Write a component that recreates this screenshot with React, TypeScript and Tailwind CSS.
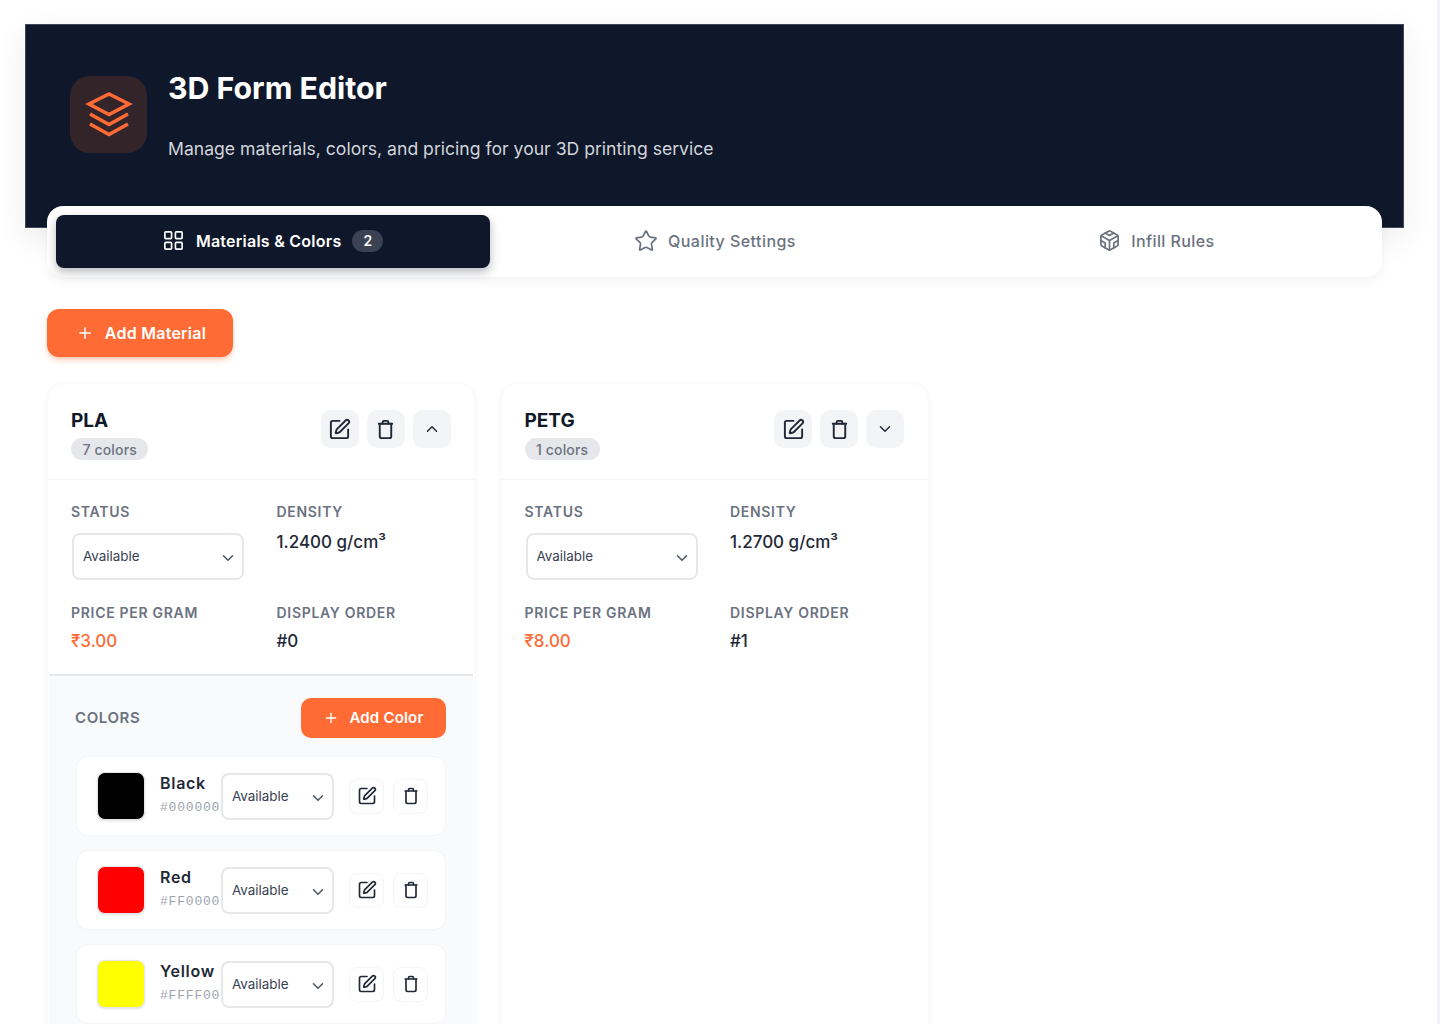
import React from 'react';
import { ChevronDown, ChevronUp, Codesandbox, LayoutGrid, Plus, SquarePen, Star } from 'lucide-react';

const TrashIcon = ({ className }: { className?: string }) => (
  <svg viewBox="0 0 24 24" fill="none" stroke="currentColor" strokeWidth="2" strokeLinecap="round" strokeLinejoin="round" className={className}>
    <path d="M5 6h14" />
    <path d="M6 6v13a2 2 0 0 0 2 2h8a2 2 0 0 0 2-2V6" />
    <path d="M9 6V4.5A1.5 1.5 0 0 1 10.5 3h3A1.5 1.5 0 0 1 15 4.5V6" />
  </svg>
);

const StackIcon = () => (
  <svg viewBox="0 0 48 48" fill="none" stroke="#ff6b35" strokeWidth="3.5" className="w-12 h-12">
    <path d="M24 3 L44 13 L24 23.5 L4 13 Z" />
    <path d="M5 23 L24 33.5 L43 23" />
    <path d="M5 33 L24 43.5 L43 33" />
  </svg>
);

const StatusSelect = ({ className }: { className: string }) => (
  <div className={`relative shrink-0 ${className}`}>
    <select className="w-full h-full appearance-none bg-white border-2 border-[#e5e7eb] rounded-lg pl-[9px] text-[13.4px] text-[#374151] outline-none">
      <option>Available</option>
      <option>Unavailable</option>
    </select>
    <ChevronDown className="absolute right-[7px] top-[16px] w-[18px] h-[18px] text-[#4b5563] pointer-events-none" />
  </div>
);

const Field = ({ label, children }: { label: string; children: React.ReactNode }) => (
  <div>
    <div className="text-[14px] leading-[20px] font-semibold uppercase tracking-[0.7px] text-[#6b7280]">{label}</div>
    {children}
  </div>
);

const colors = [
  { name: 'Black', hex: '#000000' },
  { name: 'Red', hex: '#FF0000' },
  { name: 'Yellow', hex: '#FFFF00' },
];

const ColorRow = ({ name, hex }: { name: string; hex: string }) => (
  <div className="flex items-center h-[80px] bg-white border border-[#f3f4f6] rounded-xl pl-[20px] pr-[17px]">
    <div className="w-12 h-12 shrink-0 rounded-lg border border-[#e5e7eb] shadow-sm" style={{ backgroundColor: hex }} />
    <div className="w-[61px] ml-[15px] mb-[4px] shrink-0">
      <div className="text-[16px] leading-[24px] font-semibold tracking-[0.7px] text-[#1f2937] whitespace-nowrap">{name}</div>
      <div className="mt-[4px] font-['Liberation_Mono',monospace] text-[13px] leading-[18px] tracking-[0.8px] text-[#9ca3af] whitespace-nowrap">{hex}</div>
    </div>
    <StatusSelect className="w-[113px] h-[47px]" />
    <div className="flex gap-[9px] ml-auto">
      <button className="w-[35px] h-[35px] flex items-center justify-center bg-white border border-[#f3f4f6] rounded-lg text-[#1f2937]">
        <SquarePen className="w-[20px] h-[20px]" />
      </button>
      <button className="w-[35px] h-[35px] flex items-center justify-center bg-white border border-[#f3f4f6] rounded-lg text-[#1f2937]">
        <TrashIcon className="w-[20px] h-[20px]" />
      </button>
    </div>
  </div>
);

const MaterialCard = ({ name, count, density, price, order, open }: { name: string; count: string; density: string; price: string; order: string; open?: boolean }) => (
  <div className="bg-white rounded-2xl border border-[#f9fafb] shadow-[0_1px_6px_rgba(0,0,0,0.04)] min-h-[800px]">
    <div className="flex justify-between pl-[23px] pr-[23.5px] pt-[26px] h-[96px] border-b border-[#f3f4f6]">
      <div>
        <div className="text-[19px] leading-[21px] font-bold text-[#111827]">{name}</div>
        <span className="inline-block mt-[7px] px-[11.5px] h-[22px] leading-[23px] rounded-full bg-[#e5e7eb] text-[14px] tracking-[0.15px] font-medium text-[#6b7280]">{count}</span>
      </div>
      <div className="flex gap-2">
        <button className="w-[38px] h-[38px] flex items-center justify-center bg-[#f3f4f6] rounded-[10px] text-[#1f2937]">
          <SquarePen className="w-[23px] h-[23px]" />
        </button>
        <button className="w-[38px] h-[38px] flex items-center justify-center bg-[#f3f4f6] rounded-[10px] text-[#1f2937]">
          <TrashIcon className="w-[23px] h-[23px]" />
        </button>
        <button className="w-[38px] h-[38px] flex items-center justify-center bg-[#f3f4f6] rounded-[10px] text-[#1f2937]">
          {open ? <ChevronUp className="w-[18px] h-[18px]" /> : <ChevronDown className="w-[18px] h-[18px]" />}
        </button>
      </div>
    </div>
    <div className="grid grid-cols-[205.5px_1fr] pl-[23px] pt-[22px]">
      <div className="h-[101px]">
        <Field label="Status">
          <StatusSelect className="w-[172px] h-[47px] mt-[11px] ml-[1px]" />
        </Field>
      </div>
      <Field label="Density">
        <div className="mt-[8px] text-[17px] leading-[24px] font-medium text-[#1f2937]">{density}</div>
      </Field>
      <Field label="Price per gram">
        <div className="mt-[6px] text-[17px] leading-[24px] font-medium text-[#ff6b35]">{price}</div>
      </Field>
      <Field label="Display order">
        <div className="mt-[6px] text-[17px] leading-[24px] font-medium text-[#1f2937]">{order}</div>
      </Field>
    </div>
    {open && (
      <div className="mt-[21px] mx-[1px] border-t-2 border-[#e5e7eb] bg-[#f9fafb] pt-[22px] px-[27px] pb-6">
        <div className="flex items-center justify-between">
          <span className="-ml-[1px] text-[15px] font-semibold uppercase tracking-[0.6px] text-[#6b7280]">Colors</span>
          <button className="flex items-center justify-center gap-[10px] w-[145px] h-[40px] rounded-[10px] bg-[#ff6b35] text-white text-[15px] tracking-[0.2px] font-semibold">
            <Plus className="w-[16px] h-[16px]" />
            Add Color
          </button>
        </div>
        <div className="flex flex-col gap-[14px] mt-[18px]">
          {colors.map(c => (
            <ColorRow key={c.hex} name={c.name} hex={c.hex} />
          ))}
        </div>
      </div>
    )}
  </div>
);

const App: React.FC = () => {
  return (
    <div className="flex h-screen overflow-hidden bg-white font-['Inter',sans-serif]">
      <div className="flex-1 min-w-0 pt-6 pl-[25px] pr-[33px]">
        {/* Header */}
        <div className="flex items-start h-[204px] bg-[#0f172a] border border-[#8a90a0]/40 shadow-[0_10px_30px_rgba(0,0,0,0.08)] pl-[44px] pt-[51px]">
          <div className="w-[77px] h-[77px] flex items-center justify-center rounded-[20px] bg-[#33242a]">
            <StackIcon />
          </div>
          <div className="ml-[21px] -mt-[8px]">
            <h1 className="text-[30.3px] leading-[40px] font-bold text-white">3D Form Editor</h1>
            <p className="mt-[27px] text-[17.6px] leading-[28px] text-[#d1d5db]">Manage materials, colors, and pricing for your 3D printing service</p>
          </div>
        </div>

        <div className="px-[22px]">
          {/* Tabs */}
          <div className="relative -mt-[22px] flex gap-2 h-[71px] p-[9px] bg-white rounded-2xl shadow-[0_4px_12px_rgba(0,0,0,0.05)]">
            <button className="flex-1 flex items-center justify-center gap-[11px] pb-[2px] pr-[1px] bg-[#0f172a] rounded-lg shadow-[0_4px_10px_rgba(15,23,42,0.3)] text-white text-[16px] tracking-[0.25px] font-semibold">
              <LayoutGrid className="w-[23px] h-[23px]" strokeWidth={1.75} />
              Materials &amp; Colors
              <span className="w-[31px] h-[22px] leading-[22px] rounded-full bg-[#3a4254] text-[14px]">2</span>
            </button>
            <button className="flex-1 flex items-center justify-center gap-[10px] pb-[2px] text-[#6b7280] text-[16px] tracking-[0.45px] font-medium">
              <Star className="w-[24px] h-[24px]" strokeWidth={1.75} />
              Quality Settings
            </button>
            <button className="flex-1 flex items-center justify-center gap-[10px] pb-[2px] text-[#6b7280] text-[16px] tracking-[0.4px] font-medium">
              <Codesandbox className="w-[23px] h-[23px]" strokeWidth={1.75} />
              Infill Rules
            </button>
          </div>

          <button className="mt-8 flex items-center justify-center gap-[11px] w-[186px] h-12 pl-[2px] rounded-xl bg-[#ff6b35] text-white text-[16px] tracking-[0.25px] font-semibold shadow-md shadow-[#ff6b35]/30">
            <Plus className="w-[18px] h-[18px]" />
            Add Material
          </button>

          {/* Material cards */}
          <div className="grid grid-cols-3 gap-[25.5px] mt-[26px]">
            <MaterialCard name="PLA" count="7 colors" density="1.2400 g/cm³" price="₹3.00" order="#0" open />
            <MaterialCard name="PETG" count="1 colors" density="1.2700 g/cm³" price="₹8.00" order="#1" />
          </div>
        </div>
      </div>
      <div className="w-[3px] shrink-0 bg-[#f1f3f8]" />
    </div>
  );
};

export default App;
